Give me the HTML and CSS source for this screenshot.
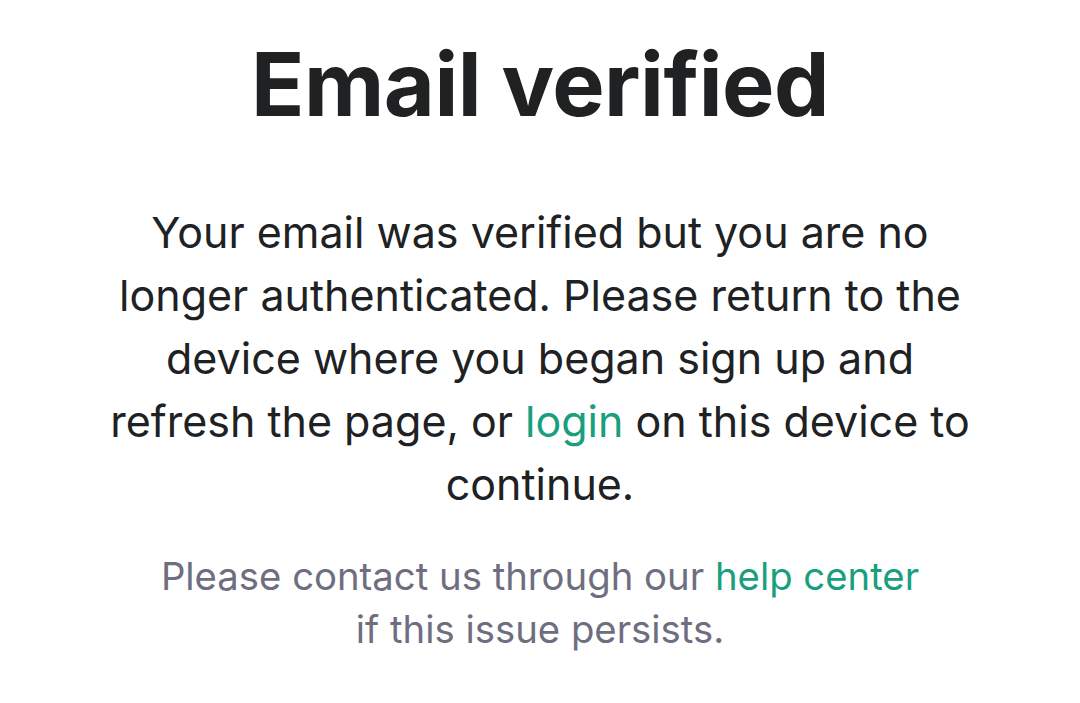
FILE: index.html
```html
<!DOCTYPE html>
<html lang="en">
<head>
<meta charset="utf-8">
<title>Email verified</title>
<link rel="stylesheet" href="styles.css">
</head>
<body>
<main class="page">
  <h1 class="title">Email verified</h1>
  <p class="message">Your email was verified but you are no longer authenticated. Please return to the device where you began sign up and refresh the page, or <a class="link" href="#">login</a> on this device to continue.</p>
  <p class="help">Please contact us through our <a class="link" href="#">help center</a><br>if this issue persists.</p>
</main>
</body>
</html>
```
FILE: styles.css
```css
html, body {
  margin: 0;
  padding: 0;
  background: #ffffff;
}
body {
  font-family: Inter, "Noto Sans", sans-serif;
  color: #202123;
}
.page {
  display: flex;
  flex-direction: column;
  align-items: center;
  padding: 32px 100px 0;
  text-align: center;
}
.title {
  margin: 0;
  font-size: 88px;
  line-height: 1.2;
  font-weight: 700;
  letter-spacing: -0.5px;
  color: #202123;
}
.message {
  margin: 63px 0 0;
  font-size: 43px;
  line-height: 63px;
  font-weight: 400;
  color: #202123;
}
.help {
  margin: 34px 0 0;
  font-size: 38.3px;
  line-height: 53px;
  color: #6e6e80;
}
.link {
  color: #1a9f7e;
  text-decoration: none;
}
```
